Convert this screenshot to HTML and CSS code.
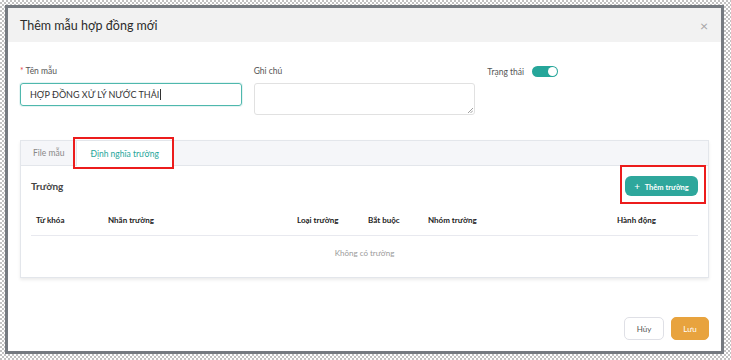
FILE: index.html
```html
<!DOCTYPE html>
<html lang="vi">
<head>
  <meta charset="UTF-8" />
  <title>Thêm mẫu hợp đồng mới</title>
  <link rel="stylesheet" href="styles.css">
</head>
<body>
  <div class="frame">
    <div class="backdrop">
      <div class="modal">
        <header class="modal-header">
          <h1 class="modal-title">Thêm mẫu hợp đồng mới</h1>
          <span class="modal-close">&times;</span>
        </header>

        <div class="modal-body">
          <div class="form-row">
            <div class="field">
              <label class="field-label"><span class="req">*</span> Tên mẫu</label>
              <div class="input focused">HỢP ĐỒNG XỬ LÝ NƯỚC THẢI<span class="caret"></span></div>
            </div>
            <div class="field">
              <label class="field-label">Ghi chú</label>
              <div class="textarea">
                <svg class="resize" width="6" height="6" viewBox="0 0 6 6"><path d="M1 6 L6 1 M3.5 6 L6 3.5" stroke="#888" stroke-width="0.8"/></svg>
              </div>
            </div>
            <div class="field status">
              <span class="field-label">Trạng thái</span>
              <span class="toggle"><span class="knob"></span></span>
            </div>
          </div>

          <div class="card">
            <div class="tabs">
              <div class="tab">File mẫu</div>
              <div class="tab active">Định nghĩa trường</div>
            </div>
            <div class="card-body">
              <div class="card-head">
                <h2 class="card-title">Trường</h2>
                <button class="btn-add"><span class="plus">+</span> Thêm trường</button>
              </div>
              <table class="fields-table">
                <thead>
                  <tr>
                    <th class="c-key">Từ khóa</th>
                    <th class="c-label">Nhãn trường</th>
                    <th class="c-type">Loại trường</th>
                    <th class="c-req">Bắt buộc</th>
                    <th class="c-group">Nhóm trường</th>
                    <th class="c-act">Hành động</th>
                  </tr>
                </thead>
                <tbody>
                  <tr>
                    <td colspan="6" class="empty">Không có trường</td>
                  </tr>
                </tbody>
              </table>
            </div>
          </div>
        </div>

        <footer class="modal-footer">
          <button class="btn btn-cancel">Hủy</button>
          <button class="btn btn-save">Lưu</button>
        </footer>
      </div>
    </div>
  </div>
</body>
</html>
```

FILE: styles.css
```css
body {
  margin: 0;
  font-family: 'Lato', 'Noto Sans', sans-serif;
  background-color: #fff;
}

/* dotted screenshot edge */
.frame {
  width: 731px;
  height: 360px;
  box-sizing: border-box;
  padding: 5px 7px 6px 5px;
  background-color: #fff;
  background-image: repeating-conic-gradient(#c2c2c2 0 25%, #fff 0 50%);
  background-size: 4px 4px;
}

.backdrop {
  height: 100%;
  box-sizing: border-box;
  padding: 3px;
  background-color: #757a80;
}

.modal {
  height: 100%;
  background-color: #fff;
  display: flex;
  flex-direction: column;
}

.modal-header {
  height: 34px;
  flex-shrink: 0;
  display: flex;
  align-items: center;
  justify-content: space-between;
  padding: 0 12px;
  background-color: #f2f2f2;
}

.modal-title {
  margin: 0;
  font-size: 12.5px;
  font-weight: 400;
  color: #2c2c2c;
}

.modal-close {
  font-size: 14px;
  color: #a5a5a5;
  margin-right: 1px;
}

.modal-body {
  padding: 24px 12px 0;
  flex: 1;
}

.form-row {
  display: grid;
  grid-template-columns: 1fr 1fr 1fr;
  gap: 12px;
}

.field-label {
  display: block;
  font-size: 8.5px;
  color: #555;
  margin-bottom: 7px;
  line-height: 10px;
}

.req {
  color: #e5484d;
}

.input {
  height: 23px;
  box-sizing: border-box;
  border: 1px solid #d9d9d9;
  border-radius: 3px;
  padding: 0 9px;
  font-size: 9px;
  color: #333;
  display: flex;
  align-items: center;
}

.input.focused {
  border-color: #4fb8ad;
  box-shadow: 0 0 0 1px rgba(79, 184, 173, 0.15);
}

.caret {
  display: inline-block;
  width: 1px;
  height: 11px;
  background-color: #333;
  margin-left: 1px;
}

.textarea {
  height: 32px;
  box-sizing: border-box;
  border: 1px solid #e1e1e1;
  border-radius: 3px;
  position: relative;
}

.resize {
  position: absolute;
  right: 1px;
  bottom: 1px;
}

.status {
  display: flex;
  align-items: center;
  align-self: start;
  gap: 8px;
}

.status .field-label {
  margin-bottom: 0;
}

.toggle {
  width: 24px;
  height: 11px;
  border-radius: 6px;
  background-color: #26a69a;
  display: flex;
  justify-content: flex-end;
  align-items: center;
  padding: 0 1px;
}

.knob {
  width: 9px;
  height: 9px;
  border-radius: 50%;
  background-color: #fff;
}

.card {
  margin-top: 25px;
  border: 1px solid #e3e6eb;
  box-shadow: 0 2px 3px rgba(0, 0, 0, 0.08);
  height: 138px;
  box-sizing: border-box;
}

.tabs {
  display: flex;
  height: 24px;
  background-color: #f5f6f9;
  border-bottom: 1px solid #e3e6eb;
}

.tab {
  padding: 0 12px;
  font-size: 8.5px;
  color: #888;
  display: flex;
  align-items: center;
}

.tab.active {
  position: relative;
  background-color: #fff;
  color: #26a69a;
  border-left: 1px solid #e3e6eb;
  border-right: 1px solid #e3e6eb;
  margin-bottom: -1px;
  padding: 0 13px;
}

.tab.active::after {
  content: "";
  position: absolute;
  left: -4px;
  right: -2px;
  top: -4px;
  bottom: -3px;
  border: 2px solid #ec1c1c;
}

.card-body {
  padding: 0 10px;
}

.card-head {
  display: flex;
  align-items: center;
  justify-content: space-between;
  height: 40px;
}

.card-title {
  margin: 0;
  font-size: 10px;
  font-weight: 700;
  color: #444;
}

.btn-add {
  position: relative;
  height: 20px;
  width: 73px;
  border: none;
  border-radius: 6px;
  background-color: #2ea79c;
  color: #fff;
  font-family: inherit;
  font-size: 7.5px;
  font-weight: 700;
  padding: 0;
}

.btn-add::after {
  content: "";
  position: absolute;
  left: -5px;
  right: -8px;
  top: -11px;
  bottom: -8px;
  border: 2px solid #ec1c1c;
}

.plus {
  font-weight: 400;
  font-size: 10px;
  margin-right: 3px;
}

.fields-table {
  width: 100%;
  border-collapse: collapse;
}

.fields-table th {
  text-align: left;
  font-size: 8px;
  font-weight: 700;
  color: #222;
  height: 29px;
  padding: 0 5px;
  border-bottom: 1px solid #e8e9ef;
  box-sizing: border-box;
}

.c-key { width: 72px; }
.c-label { width: 189px; }
.c-type { width: 71px; }
.c-req { width: 60px; }
.c-group { width: 189px; }

.empty {
  text-align: center;
  font-size: 8px;
  color: #9a9a9a;
  height: 32px;
}

.modal-footer {
  display: flex;
  justify-content: flex-end;
  gap: 7px;
  padding: 0 12px 11px;
}

.btn {
  height: 23px;
  border-radius: 5px;
  font-family: inherit;
  font-size: 8px;
  padding: 0;
}

.btn-cancel {
  width: 40px;
  background-color: #fff;
  border: 1px solid #dfe0e6;
  color: #555;
}

.btn-save {
  width: 38px;
  background-color: #e8a33e;
  border: 1px solid #e8a33e;
  color: #fff;
}
```
